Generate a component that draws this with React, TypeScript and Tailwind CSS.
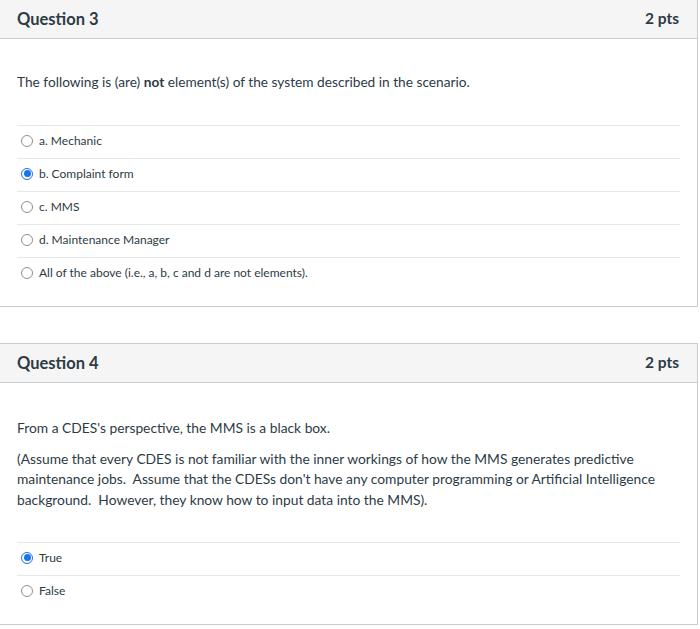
import React from "react";

function Radio({ checked }: { checked?: boolean }) {
  if (checked) {
    return (
      <span className="flex h-[12px] w-[12px] items-center justify-center rounded-full border border-[#1a73e8] bg-white">
        <span className="h-[7px] w-[7px] rounded-full bg-[#1a73e8]" />
      </span>
    );
  }
  return <span className="h-[12px] w-[12px] rounded-full border border-[#8f8f8f] bg-white" />;
}

function Option({ label, checked }: { label: string; checked?: boolean }) {
  return (
    <div className="flex h-[33px] items-center border-t border-[#e6e8ea] pb-[3px] pl-[4px]">
      <div className="flex w-[18px] items-center">
        <Radio checked={checked} />
      </div>
      <span className="text-[12px] text-[#2d3b45]">{label}</span>
    </div>
  );
}

function Header({ title }: { title: string }) {
  return (
    <div className="flex h-[39px] items-center justify-between border-b border-[#c7cdd1] bg-[#f5f5f5] pl-[17px] pr-[18px]">
      <span className="text-[16.5px] font-bold text-[#2d3b45]">{title}</span>
      <span className="text-[15.5px] font-bold text-[#2d3b45]">2 pts</span>
    </div>
  );
}

export default function App() {
  return (
    <div className="min-h-[629px] w-[700px] bg-white font-['Lato',sans-serif]">
      <div className="w-[698px] border-b border-r border-[#c7cdd1]">
        <Header title="Question 3" />
        <div className="pl-[17px] pr-[17px] pb-[16px]">
          <p className="flex h-[86px] items-center pt-[1px] text-[13.7px] text-[#2d3b45]">
            <span>
              The following is (are) <b>not</b> element(s) of the system described in the scenario.
            </span>
          </p>
          <div className="w-[663px]">
            <Option label="a. Mechanic" />
            <Option label="b. Complaint form" checked />
            <Option label="c. MMS" />
            <Option label="d. Maintenance Manager" />
            <Option label="All of the above (i.e., a, b, c and d are not elements)." />
          </div>
        </div>
      </div>

      <div className="mt-[36px] w-[698px] border-b border-r border-t border-[#c7cdd1]">
        <Header title="Question 4" />
        <div className="pl-[17px] pr-[17px] pb-[16px]">
          <div className="pt-[35px] text-[13.8px] leading-[20.5px] text-[#2d3b45]">
            <p>From a CDES's perspective, the MMS is a black box.</p>
            <p className="mt-[10px]">
              (Assume that every CDES is not familiar with the inner workings of how the MMS generates predictive
              maintenance jobs.&nbsp; Assume that the CDESs don't have any computer programming or Artificial Intelligence
              background.&nbsp; However, they know how to input data into the MMS).
            </p>
          </div>
          <div className="mt-[32px] w-[663px]">
            <Option label="True" checked />
            <Option label="False" />
          </div>
        </div>
      </div>
    </div>
  );
}
